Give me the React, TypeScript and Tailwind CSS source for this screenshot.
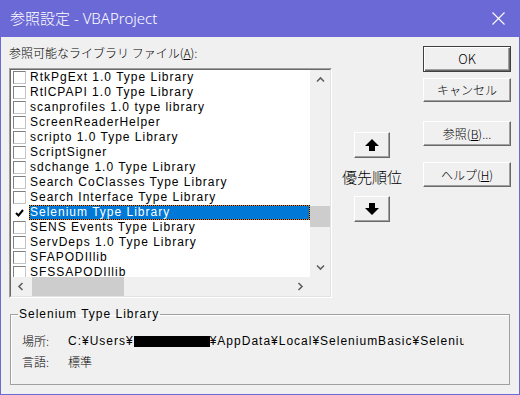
import React from "react";

const items = [
  "RtkPgExt 1.0 Type Library",
  "RtlCPAPI 1.0 Type Library",
  "scanprofiles 1.0 type library",
  "ScreenReaderHelper",
  "scripto 1.0 Type Library",
  "ScriptSigner",
  "sdchange 1.0 Type Library",
  "Search CoClasses Type Library",
  "Search Interface Type Library",
  "Selenium Type Library",
  "SENS Events Type Library",
  "ServDeps 1.0 Type Library",
  "SFAPODIllib",
  "SFSSAPODIllib",
];

const JP = "font-['Noto_Sans_CJK_JP',sans-serif] font-light";
const LAT = "font-['Liberation_Sans','Noto_Sans_CJK_JP',sans-serif] tracking-[1px]";

function Chevron({ dir }: { dir: "up" | "down" | "left" | "right" }) {
  const pts =
    dir === "up"
      ? "1,5.5 4.5,2 8,5.5"
      : dir === "down"
      ? "1,2.5 4.5,6 8,2.5"
      : dir === "left"
      ? "5.5,1 2,4.5 5.5,8"
      : "2.5,1 6,4.5 2.5,8";
  return (
    <svg width="9" height="9" viewBox="0 0 9 9">
      <polyline points={pts} fill="none" stroke="#606060" strokeWidth="1.6" />
    </svg>
  );
}

function Btn({
  children,
  def,
  className,
}: {
  children: React.ReactNode;
  def?: boolean;
  className: string;
}) {
  return (
    <div
      className={`flex items-center justify-center bg-[#f0f0f0] text-[12px] leading-[14px] text-black ${JP} ${
        def
          ? "border border-[#404040] shadow-[inset_1px_1px_0_#fff,inset_-1px_-1px_0_#696969,inset_-2px_-2px_0_#a0a0a0]"
          : "border border-t-white border-l-white border-r-[#696969] border-b-[#696969] shadow-[inset_-1px_-1px_0_#a0a0a0]"
      } ${className}`}
    >
      {children}
    </div>
  );
}

function Arrow({ up }: { up?: boolean }) {
  return (
    <svg width="14" height="12" viewBox="0 0 14 12">
      <polygon
        points={up ? "7,0 14,7 10,7 10,12 4,12 4,7 0,7" : "7,12 14,5 10,5 10,0 4,0 4,5 0,5"}
        fill="#000"
      />
    </svg>
  );
}

export default function App() {
  return (
    <div className="w-[520px] h-[395px] bg-[#6b69d6] flex flex-col px-px pb-px overflow-hidden">
      <div className="h-[37px] shrink-0 flex items-center justify-between pl-[9px] pr-[14px] text-white text-[15px] font-['Noto_Sans','Noto_Sans_CJK_JP',sans-serif] font-light">
        <span>参照設定 - VBAProject</span>
        <svg width="13" height="13" viewBox="0 0 13 13">
          <path d="M0.5 0.5 L12.5 12.5 M12.5 0.5 L0.5 12.5" stroke="#fff" strokeWidth="1.1" />
        </svg>
      </div>
      <div className="flex-1 bg-[#f0f0f0] flex flex-col text-black">
        <div className="flex items-start">
          {/* left column */}
          <div className="ml-[8px] pt-[8px] flex flex-col">
            <div className={`h-[16px] leading-[16px] text-[12px] ${JP}`}>
              参照可能なライブラリ ファイル(<span className="underline">A</span>):
            </div>
            <div className="mt-[7px] w-[323px] h-[230px] border border-t-[#a0a0a0] border-l-[#a0a0a0] border-r-white border-b-white">
              <div className="w-full h-full border border-t-[#696969] border-l-[#696969] border-r-[#e3e3e3] border-b-[#e3e3e3] grid grid-cols-[1fr_20px] grid-rows-[1fr_19px]">
                <div className="bg-white overflow-hidden">
                  {items.map((it, i) => {
                    const sel = i === 9;
                    return (
                      <div key={it} className="flex h-[15px]">
                        <div className="w-[18px] shrink-0 flex items-center pl-[2px]">
                          <div
                            className={`w-[13px] h-[13px] flex items-center justify-center bg-white border ${
                              sel
                                ? "border-transparent"
                                : "border-t-[#7f7f7f] border-l-[#7f7f7f] border-r-[#c4c4c4] border-b-[#c4c4c4]"
                            }`}
                          >
                            {sel && (
                              <svg width="9" height="8" viewBox="0 0 9 8">
                                <path d="M1 4 L3.5 6.5 L8 1" fill="none" stroke="#000" strokeWidth="2" />
                              </svg>
                            )}
                          </div>
                        </div>
                        {sel ? (
                          <div className="flex-1 h-[15px] border border-dotted border-black bg-[#e8891c]">
                            <div className={`h-full bg-[#0078d7] text-white text-[12px] leading-[13px] whitespace-nowrap ${LAT}`}>
                              {it}
                            </div>
                          </div>
                        ) : (
                          <div className={`flex-1 pl-px text-[12px] leading-[15px] whitespace-nowrap ${LAT}`}>{it}</div>
                        )}
                      </div>
                    );
                  })}
                </div>
                <div className="bg-[#f0f0f0] flex flex-col">
                  <div className="h-[20px] flex items-center justify-center">
                    <Chevron dir="up" />
                  </div>
                  <div className="flex-1 flex flex-col">
                    <div className="mt-[116px] h-[21px] bg-[#cdcdcd]" />
                  </div>
                  <div className="h-[20px] flex items-center justify-center">
                    <Chevron dir="down" />
                  </div>
                </div>
                <div className="bg-[#f0f0f0] flex">
                  <div className="w-[20px] flex items-center justify-center">
                    <Chevron dir="left" />
                  </div>
                  <div className="ml-px w-[92px] bg-[#cdcdcd]" />
                  <div className="flex-1" />
                  <div className="w-[20px] flex items-center justify-center">
                    <Chevron dir="right" />
                  </div>
                </div>
                <div className="bg-[#f0f0f0]" />
              </div>
            </div>
          </div>
          {/* middle column */}
          <div className="ml-[10px] pt-[95px] w-[60px] flex flex-col items-center">
            <Btn className="w-[36px] h-[26px]">
              <Arrow up />
            </Btn>
            <div className={`mt-[10px] text-[15px] leading-[18px] whitespace-nowrap ${JP}`}>優先順位</div>
            <Btn className="mt-[10px] w-[36px] h-[26px]">
              <Arrow />
            </Btn>
          </div>
          {/* right column */}
          <div className="ml-[21px] pt-[9px] w-[88px] flex flex-col">
            <Btn def className="h-[26px]">
              <span className="text-[13px]">OK</span>
            </Btn>
            <Btn className="mt-[6px] h-[24px]">キャンセル</Btn>
            <Btn className="mt-[19px] h-[25px]">
              参照(<span className="underline">B</span>)...
            </Btn>
            <Btn className="mt-[16px] h-[25px]">
              ヘルプ(<span className="underline">H</span>)
            </Btn>
          </div>
        </div>
        <fieldset className="ml-[9px] mt-[9px] w-[500px] h-[78px] border border-[#a0a0a0] shadow-[inset_1px_1px_0_#fff]">
          <legend className={`ml-[7px] px-px text-[12px] leading-[14px] ${LAT}`}>Selenium Type Library</legend>
          <div className="mt-[12px] ml-[11px] flex h-[16px] items-center">
            <div className={`w-[46px] text-[12px] leading-[16px] ${JP}`}>場所:</div>
            <div className={`w-[396px] overflow-hidden whitespace-nowrap flex items-center text-[12px] leading-[16px] ${LAT}`}>
              <span>C:¥Users¥</span>
              <span className="inline-block shrink-0 w-[76px] h-[11px] bg-black" />
              <span>¥AppData¥Local¥SeleniumBasic¥Selenium.tlb</span>
            </div>
          </div>
          <div className="mt-[5px] ml-[11px] flex h-[16px] items-center">
            <div className={`w-[46px] text-[12px] leading-[16px] ${JP}`}>言語:</div>
            <div className={`text-[12px] leading-[16px] ${JP}`}>標準</div>
          </div>
        </fieldset>
      </div>
    </div>
  );
}
